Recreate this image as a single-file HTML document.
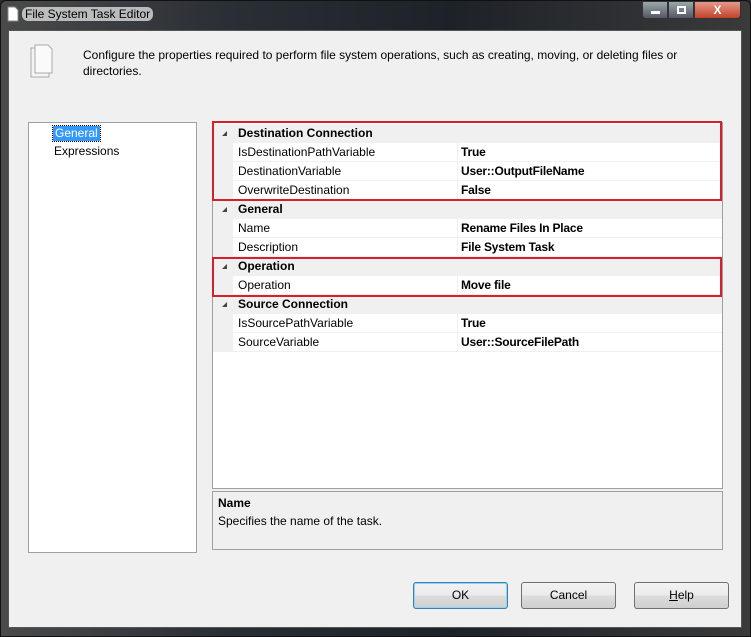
<!DOCTYPE html>
<html><head><style>
*{margin:0;padding:0;box-sizing:border-box}
body{width:751px;height:637px;overflow:hidden;font-family:"Liberation Sans",sans-serif;font-size:12px;background:#2b2b2b;position:relative}
.frame{position:absolute;left:0;top:0;width:751px;height:637px;background:linear-gradient(90deg,#4a4a4a,#2a2f36 30%,#1d2229 60%,#3a3a3a);border:1px solid #111;border-radius:6px 6px 0 0}
.title{position:absolute;left:22px;top:7px;color:#000;font-size:12px;background:rgba(230,230,230,.75);padding:0 3px;border-radius:6px}
.client{position:absolute;left:8px;top:30px;width:734px;height:598px;background:#f0f0f0;border:1px solid #555}
.abs{position:absolute}
.box{position:absolute;background:#fff;border:1px solid #a0a0a0}
.row{position:absolute;left:0;width:509px;height:19px;line-height:19px;border-bottom:1px solid #f0f0f0}
.row .n{position:absolute;left:25px}
.row .v{position:absolute;left:248px;font-weight:bold;letter-spacing:-0.2px}
.row .sep{position:absolute;left:244px;top:0;width:1px;height:19px;background:#f0f0f0}
.cat{background:#f0f0f0;font-weight:bold}
.gut{position:absolute;left:0;top:0;width:20px;height:19px;background:#f0f0f0}
.tri{position:absolute;left:9px;top:7px;width:0;height:0;border-left:5px solid transparent;border-bottom:5px solid #444}
.red{position:absolute;border:2px solid #d3202a}
.btn{position:absolute;top:582px;width:95px;height:27px;border:1px solid #707070;border-radius:3px;background:linear-gradient(#f2f2f2,#ebebeb 50%,#dddddd 50%,#cfcfcf);text-align:center;line-height:25px}
</style></head><body>
<div class="frame"></div>
<svg class="abs" style="left:6px;top:6px" width="14" height="16"><path d="M2 1h7l3 3v11H2z" fill="#fff" stroke="#888"/></svg>
<div class="title">File System Task Editor</div>
<div class="abs" style="left:642px;top:1px;width:26px;height:18px;border:1px solid #333;border-radius:0 0 0 4px;background:linear-gradient(#9aa,#556)"></div>
<div class="abs" style="left:668px;top:1px;width:26px;height:18px;border:1px solid #333;background:linear-gradient(#9aa,#556)"><div class="abs" style="left:8px;top:4px;width:9px;height:8px;border:2px solid #fff"></div></div>
<div class="abs" style="left:694px;top:1px;width:47px;height:18px;border:1px solid #333;border-radius:0 0 4px 0;background:linear-gradient(#e49a88,#c2412a);color:#fff;font-weight:bold;text-align:center;line-height:17px">X</div>
<div class="abs" style="left:651px;top:11px;width:9px;height:3px;background:#fff"></div>
<div class="client"></div>
<svg class="abs" style="left:30px;top:44px" width="24" height="34"><path d="M1 4h14l4 4v25H1z" fill="#f4f4f4" stroke="#aaa"/><path d="M5 1h13l4 4v24H5z" fill="#fafafa" stroke="#aaa"/></svg>
<div class="abs" style="left:83px;top:47px;width:620px;line-height:16px">Configure the properties required to perform file system operations, such as creating, moving, or deleting files or directories.</div>
<div class="box" style="left:28px;top:122px;width:169px;height:431px">
<div class="abs" style="left:24px;top:3px;background:#3399ff;color:#fff;padding:0 2px;line-height:15px;outline:1px dotted #000">General</div>
<div class="abs" style="left:25px;top:21px">Expressions</div>
</div>
<div class="box" style="left:212px;top:122px;width:511px;height:367px">
<div style="position:relative;top:1px">
<div class="row cat" style="top:0"><div class="tri"></div><span class="n">Destination Connection</span></div>
<div class="row" style="top:19px"><div class="gut"></div><span class="n">IsDestinationPathVariable</span><div class="sep"></div><span class="v">True</span></div>
<div class="row" style="top:38px"><div class="gut"></div><span class="n">DestinationVariable</span><div class="sep"></div><span class="v">User::OutputFileName</span></div>
<div class="row" style="top:57px"><div class="gut"></div><span class="n">OverwriteDestination</span><div class="sep"></div><span class="v">False</span></div>
<div class="row cat" style="top:76px"><div class="tri"></div><span class="n">General</span></div>
<div class="row" style="top:95px"><div class="gut"></div><span class="n">Name</span><div class="sep"></div><span class="v">Rename Files In Place</span></div>
<div class="row" style="top:114px"><div class="gut"></div><span class="n">Description</span><div class="sep"></div><span class="v">File System Task</span></div>
<div class="row cat" style="top:133px"><div class="tri"></div><span class="n">Operation</span></div>
<div class="row" style="top:152px"><div class="gut"></div><span class="n">Operation</span><div class="sep"></div><span class="v">Move file</span></div>
<div class="row cat" style="top:171px"><div class="tri"></div><span class="n">Source Connection</span></div>
<div class="row" style="top:190px"><div class="gut"></div><span class="n">IsSourcePathVariable</span><div class="sep"></div><span class="v">True</span></div>
<div class="row" style="top:209px"><div class="gut"></div><span class="n">SourceVariable</span><div class="sep"></div><span class="v">User::SourceFilePath</span></div>
</div></div>
<div class="red" style="left:212px;top:121px;width:510px;height:80px"></div>
<div class="red" style="left:212px;top:257px;width:510px;height:40px"></div>
<div class="abs" style="left:212px;top:491px;width:511px;height:59px;border:1px solid #a0a0a0;background:#f0f0f0">
<div class="abs" style="left:5px;top:4px;font-weight:bold">Name</div>
<div class="abs" style="left:5px;top:22px">Specifies the name of the task.</div>
</div>
<div class="btn" style="left:413px;border-color:#3c7fb1;box-shadow:inset 0 0 0 1px #8fd4f5">OK</div>
<div class="btn" style="left:521px">Cancel</div>
<div class="btn" style="left:634px"><u>H</u>elp</div>
</body></html>
